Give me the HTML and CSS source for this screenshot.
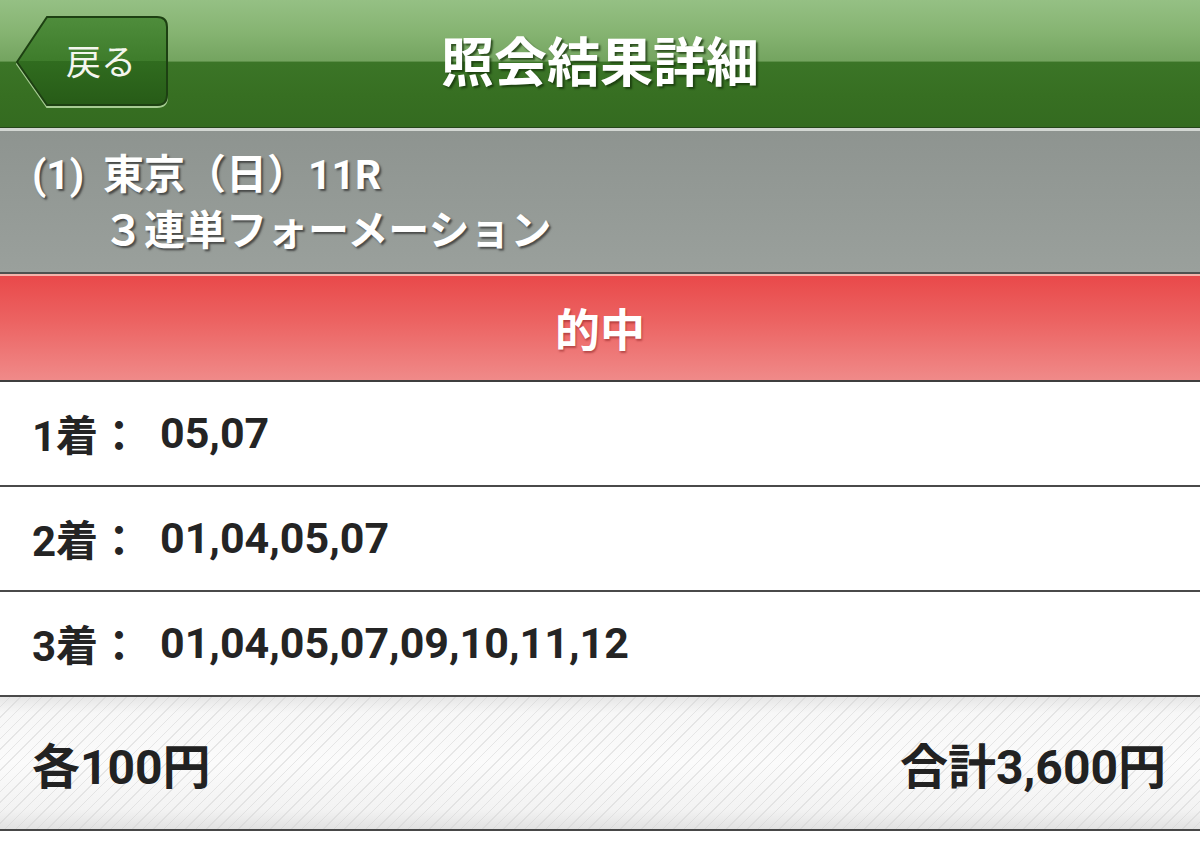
FILE: index.html
```html
<!DOCTYPE html>
<html lang="ja">
<head>
<meta charset="utf-8">
<title>照会結果詳細</title>
<link rel="stylesheet" href="styles.css">
</head>
<body>
<div class="page">
  <header class="header">
    <div class="back">
      <svg class="back-shape" viewBox="0 0 160 96" width="160" height="96" aria-hidden="true">
        <defs>
          <linearGradient id="btn" x1="0" y1="0" x2="0" y2="1">
            <stop offset="0" stop-color="#4f8d3c"/>
            <stop offset="0.5" stop-color="#3e7c2b"/>
            <stop offset="0.5" stop-color="#306c1f"/>
            <stop offset="1" stop-color="#275b17"/>
          </linearGradient>
        </defs>
        <path d="M5 51 L35 6 L145 6 Q155 6 155 16 L155 84 Q155 94 145 94 L35 94 Z" fill="none" stroke="#a6cc92" stroke-width="2"/>
        <path d="M5 49 L35 4 L145 4 Q155 4 155 14 L155 82 Q155 92 145 92 L35 92 Z" fill="url(#btn)" stroke="#1d4012" stroke-width="2"/>
      </svg>
      <span class="back-label">戻る</span>
    </div>
    <h1 class="title">照会結果詳細</h1>
    <div class="spacer"></div>
  </header>

  <section class="race">
    <div class="race-line"><span class="race-no">(1)</span>東京（日）11R</div>
    <div class="race-line race-type">３連単フォーメーション</div>
  </section>

  <section class="result">的中</section>

  <div class="row"><span class="label">1着：</span><span class="nums">05,07</span></div>
  <div class="row"><span class="label">2着：</span><span class="nums">01,04,05,07</span></div>
  <div class="row"><span class="label">3着：</span><span class="nums">01,04,05,07,09,10,11,12</span></div>

  <footer class="total">
    <span>各100円</span>
    <span>合計3,600円</span>
  </footer>
</div>
</body>
</html>
```

FILE: styles.css
```css
* { box-sizing: border-box; }

html, body {
  margin: 0;
  padding: 0;
  background: #ffffff;
}

body {
  font-family: Roboto, "Noto Sans CJK JP", sans-serif;
  color: #222222;
}

.page {
  width: 1200px;
}

/* ---------- header ---------- */
.header {
  height: 128px;
  display: grid;
  grid-template-columns: 1fr auto 1fr;
  align-items: center;
  background: linear-gradient(to bottom,
    #95c084 0%,
    #86b472 25%,
    #74a460 48%,
    #3b7527 49%,
    #376f22 75%,
    #346b20 100%);
  border-bottom: 1px solid #26451b;
}

.back {
  position: relative;
  width: 160px;
  height: 96px;
  margin-left: 12px;
  margin-top: -6px;
  display: flex;
  align-items: center;
  justify-content: center;
  padding-left: 22px;
  padding-bottom: 2px;
}

.back-shape {
  position: absolute;
  left: 0;
  top: 0;
}

.back-label {
  position: relative;
  font-family: "Noto Sans CJK JP", sans-serif;
  font-size: 35px;
  font-weight: 400;
  color: #f4f6ee;
  line-height: 1;
  margin-left: -4px;
}

.title {
  margin: 0;
  font-family: "Noto Sans CJK JP", sans-serif;
  font-size: 53px;
  font-weight: 700;
  color: #ffffff;
  line-height: 1;
  padding-bottom: 8px;
  text-shadow: 2px 2px 2px rgba(20, 50, 10, 0.75);
}

/* ---------- race info ---------- */
.race {
  border-top: 3px solid #d3d7d3;
  border-bottom: 2px solid #4f504f;
  background: linear-gradient(to bottom, #8e9490 0%, #959b97 60%, #9aa09c 100%);
  padding: 16px 0 10px 32px;
  height: 146px;
}

.race-line {
  font-size: 41px;
  font-weight: 700;
  line-height: 56px;
  color: #ffffff;
  text-shadow: 2px 2px 2px rgba(40, 40, 40, 0.7);
  white-space: nowrap;
}

.race-no {
  display: inline-block;
  width: 71px;
}

.race-type {
  padding-left: 71px;
}

/* ---------- result ---------- */
.result {
  border-top: 2px solid #f5b3ab;
  border-bottom: 2px solid #3f3f3f;
  height: 108px;
  display: flex;
  align-items: center;
  justify-content: center;
  padding-bottom: 2px;
  background: linear-gradient(to bottom, #e9494a 0%, #ec6463 45%, #f08a89 100%);
  font-family: "Noto Sans CJK JP", sans-serif;
  font-size: 45px;
  font-weight: 700;
  color: #ffffff;
  text-shadow: 1px 2px 2px rgba(120, 20, 20, 0.45);
}

/* ---------- rows ---------- */
.row {
  height: 105px;
  border-bottom: 2px solid #4a4a4a;
  display: flex;
  align-items: center;
  padding-left: 32px;
  padding-bottom: 2px;
  font-size: 43px;
  font-weight: 700;
  color: #242424;
  background: #ffffff;
}

.label {
  width: 128px;
  flex: none;
  font-size: 42px;
}

/* ---------- total ---------- */
.total {
  height: 134px;
  border-bottom: 2px solid #474747;
  display: flex;
  align-items: center;
  justify-content: space-between;
  padding: 0 34px 0 32px;
  font-size: 48px;
  font-weight: 700;
  color: #222222;
  background:
    repeating-linear-gradient(135deg,
      rgba(255, 255, 255, 0) 0px,
      rgba(255, 255, 255, 0) 6.5px,
      rgba(210, 210, 210, 0.5) 6.5px,
      rgba(210, 210, 210, 0.5) 7.5px),
    linear-gradient(to bottom, #e6e6e6 0%, #f7f7f7 12%, #fbfbfb 50%, #f3f3f3 85%, #e2e2e2 100%);
}
```
